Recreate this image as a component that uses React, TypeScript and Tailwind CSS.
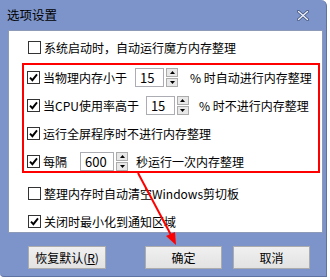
import React from 'react';

const Check = ({ on }: { on?: boolean }) => (
  <span className="w-[13px] h-[13px] shrink-0 border border-[#333] bg-white flex items-center justify-center">
    {on && (
      <svg width="9" height="9" viewBox="0 0 9 9">
        <path d="M1 4.6 L3.4 7.2 L8 1.4" stroke="#000" strokeWidth="1.9" fill="none" />
      </svg>
    )}
  </span>
);

const Spin = () => (
  <span className="ml-[2px] w-[12px] h-[19px] flex flex-col gap-[1px]">
    <span className="flex-1 border border-[#acacac] bg-[#e8e8e8] flex items-center justify-center">
      <svg width="5" height="3" viewBox="0 0 5 3"><path d="M0 3 L2.5 0 L5 3Z" fill="#000" /></svg>
    </span>
    <span className="flex-1 border border-[#acacac] bg-[#e8e8e8] flex items-center justify-center">
      <svg width="5" height="3" viewBox="0 0 5 3"><path d="M0 0 L2.5 3 L5 0Z" fill="#000" /></svg>
    </span>
  </span>
);

const Num = ({ v, cls }: { v: string; cls: string }) => (
  <span className={`h-[19px] border border-[#abadb3] bg-white flex items-center pl-[4px] text-[13px] ${cls}`}>
    {v}
  </span>
);

const Btn = ({ children, cls }: { children: React.ReactNode; cls: string }) => (
  <div
    className={`h-[23px] border border-[#acacac] bg-gradient-to-b from-[#f0f0f0] to-[#e2e2e2] flex items-center justify-center text-[12px] ${cls}`}
  >
    {children}
  </div>
);

export default function App() {
  return (
    <div className="w-[330px] h-[280px] bg-white font-['Noto_Sans_CJK_SC',sans-serif] text-black text-[12px]">
      <div className="relative w-[327px] h-[277px] bg-[#7c94c9] rounded-tr-[6px] rounded-bl-[4px] border-r border-b border-[#5f73a3]">
        {/* title bar */}
        <div className="h-[30px] flex items-center pl-[7px] pr-[17px]">
          <span className="text-[12.5px]">选项设置</span>
          <svg className="ml-auto" width="12" height="11" viewBox="0 0 12 11">
            <path d="M1.5 1.5 L10.5 9.5 M10.5 1.5 L1.5 9.5" stroke="#3e4f7a" strokeWidth="3" strokeLinecap="round" />
            <path d="M1.5 1.5 L10.5 9.5 M10.5 1.5 L1.5 9.5" stroke="#eef1f8" strokeWidth="1.5" strokeLinecap="round" />
          </svg>
        </div>

        {/* panel */}
        <div className="ml-[8px] w-[315px] h-[203px] bg-white border border-[#8d9ab8] flex flex-col">
          <div className="mt-[7px] pl-[19px] h-[19px] flex items-center">
            <Check />
            <span className="ml-[3px]">系统启动时，自动运行魔方内存整理</span>
          </div>

          <div className="mt-[6px] ml-[13px] w-[298px] border-2 border-[#ff0000] pt-[3px] pl-[3px] flex flex-col gap-[9px]">
            <div className="h-[19px] flex items-center">
              <Check on />
              <span className="ml-[3px]">当物理内存小于</span>
              <Num v="15" cls="ml-[8px] w-[29px]" />
              <Spin />
              <span className="ml-[12px]">% 时自动进行内存整理</span>
            </div>
            <div className="h-[19px] flex items-center">
              <Check on />
              <span className="ml-[3px]">当CPU使用率高于</span>
              <Num v="15" cls="ml-[7px] w-[29px]" />
              <Spin />
              <span className="ml-[10px]">% 时不进行内存整理</span>
            </div>
            <div className="h-[19px] flex items-center">
              <Check on />
              <span className="ml-[3px]">运行全屏程序时不进行内存整理</span>
            </div>
            <div className="h-[19px] flex items-center">
              <Check on />
              <span className="ml-[3px]">每隔</span>
              <Num v="600" cls="ml-[13px] w-[34px]" />
              <Spin />
              <span className="ml-[8px]">秒运行一次内存整理</span>
            </div>
          </div>

          <div className="mt-[11px] pl-[19px] h-[19px] flex items-center">
            <Check />
            <span className="ml-[3px]">整理内存时自动清空Windows剪切板</span>
          </div>
          <div className="mt-[9px] pl-[19px] h-[19px] flex items-center">
            <Check on />
            <span className="ml-[3px]">关闭时最小化到通知区域</span>
          </div>
        </div>

        {/* buttons */}
        <div className="mt-[13px] pl-[28px] flex">
          <Btn cls="w-[78px]">
            恢复默认(<span className="underline">R</span>)
          </Btn>
          <Btn cls="ml-[39px] w-[77px]">确定</Btn>
          <Btn cls="ml-[11px] w-[77px]">取消</Btn>
        </div>

        {/* annotation arrow */}
        <svg className="absolute left-0 top-0 pointer-events-none" width="327" height="277" viewBox="0 0 327 277">
          <path d="M138 173 L171 235" stroke="#ff0000" strokeWidth="2" />
          <path d="M176 245 L166 236 L175 232 Z" fill="#ff0000" />
        </svg>
      </div>
    </div>
  );
}
